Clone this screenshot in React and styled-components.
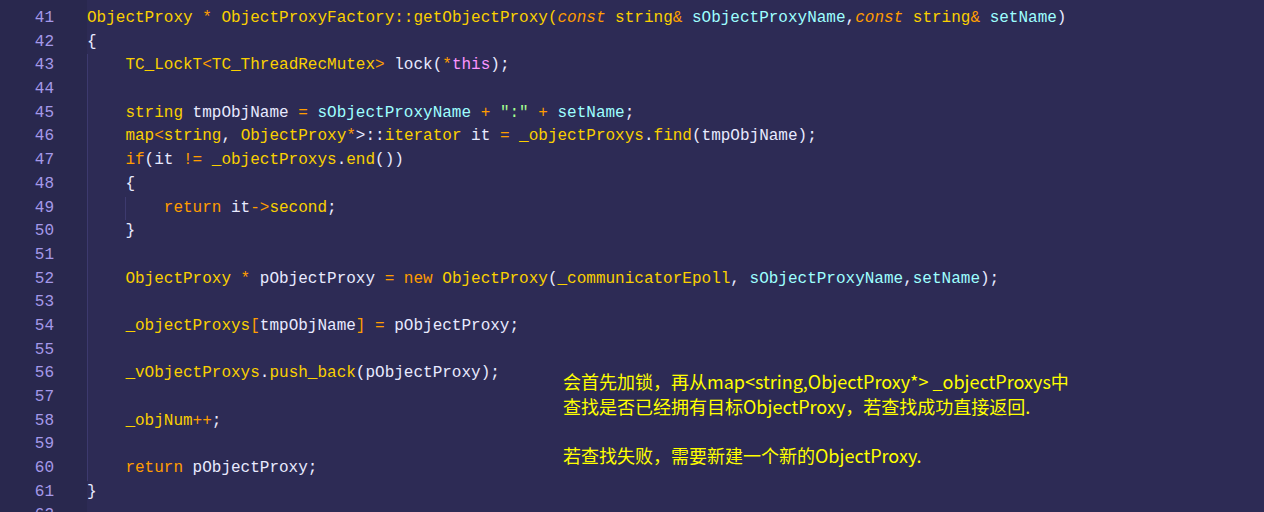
import React from 'react';
import styled, { createGlobalStyle } from 'styled-components';

const GlobalStyle = createGlobalStyle`
  html, body {
    margin: 0;
    padding: 0;
    background: #2d2b55;
    overflow: hidden;
  }
`;

// token colours, shades-of-purple style
const colors = {
  t: '#fad000', // types / functions
  k: '#ff9d00', // keywords, operators
  v: '#9effff', // params
  s: '#a5ff90', // strings
  p: '#fb94ff', // this
  w: '#e8eaff', // plain
};

// t = yellow, k = orange, i = italic orange, v = cyan, s = green, p = pink, w = white
const lines = [
  { n: 41, lvl: 0, code: [['t', 'ObjectProxy'], ['k', ' * '], ['t', 'ObjectProxyFactory::getObjectProxy('], ['i', 'const'], ['t', ' string'], ['k', '&'], ['v', ' sObjectProxyName'], ['w', ','], ['i', 'const'], ['t', ' string'], ['k', '&'], ['v', ' setName'], ['w', ')']] },
  { n: 42, lvl: 0, code: [['w', '{']] },
  { n: 43, lvl: 1, code: [['t', 'TC_LockT'], ['k', '<'], ['t', 'TC_ThreadRecMutex'], ['k', '>'], ['w', ' lock('], ['k', '*'], ['p', 'this'], ['w', ');']] },
  { n: 44, lvl: 1, code: [] },
  { n: 45, lvl: 1, code: [['t', 'string'], ['w', ' tmpObjName '], ['k', '='], ['v', ' sObjectProxyName'], ['k', ' + '], ['s', '":"'], ['k', ' + '], ['v', 'setName'], ['w', ';']] },
  { n: 46, lvl: 1, code: [['t', 'map'], ['k', '<'], ['t', 'string'], ['w', ', '], ['t', 'ObjectProxy'], ['k', '*'], ['w', '>::'], ['t', 'iterator'], ['w', ' it '], ['k', '='], ['t', ' _objectProxys'], ['w', '.'], ['t', 'find'], ['w', '(tmpObjName);']] },
  { n: 47, lvl: 1, code: [['k', 'if'], ['w', '(it '], ['k', '!='], ['t', ' _objectProxys'], ['w', '.'], ['t', 'end'], ['w', '())']] },
  { n: 48, lvl: 1, code: [['w', '{']] },
  { n: 49, lvl: 2, code: [['k', 'return'], ['w', ' it'], ['k', '->'], ['t', 'second'], ['w', ';']] },
  { n: 50, lvl: 1, code: [['w', '}']] },
  { n: 51, lvl: 1, code: [] },
  { n: 52, lvl: 1, code: [['t', 'ObjectProxy'], ['k', ' * '], ['w', 'pObjectProxy '], ['k', '= new'], ['t', ' ObjectProxy'], ['w', '('], ['t', '_communicatorEpoll'], ['w', ', '], ['v', 'sObjectProxyName'], ['w', ','], ['v', 'setName'], ['w', ');']] },
  { n: 53, lvl: 1, code: [] },
  { n: 54, lvl: 1, code: [['t', '_objectProxys'], ['k', '['], ['w', 'tmpObjName'], ['k', '] = '], ['w', 'pObjectProxy;']] },
  { n: 55, lvl: 1, code: [] },
  { n: 56, lvl: 1, code: [['t', '_vObjectProxys'], ['w', '.'], ['t', 'push_back'], ['w', '(pObjectProxy);']] },
  { n: 57, lvl: 1, code: [] },
  { n: 58, lvl: 1, code: [['t', '_objNum'], ['k', '++'], ['w', ';']] },
  { n: 59, lvl: 1, code: [] },
  { n: 60, lvl: 1, code: [['k', 'return'], ['w', ' pObjectProxy;']] },
  { n: 61, lvl: 0, code: [['w', '}']] },
  { n: 62, lvl: 0, code: [] },
];

const Editor = styled.div`
  position: relative;
  display: flex;
  width: 1264px;
  height: 512px;
  background: #2d2b55;
  font-family: "Liberation Mono", "DejaVu Sans Mono", monospace;
  font-size: 16px;
  overflow: hidden;
`;

const Gutter = styled.div`
  width: 87px;
  flex-shrink: 0;
  background: #29284e;
  padding-top: 7px;
`;

const LineNo = styled.div`
  height: 23.7px;
  line-height: 23.7px;
  width: 54px;
  text-align: right;
  color: #a599e9;
`;

const Code = styled.div`
  flex: 1;
  padding-top: 7px;
`;

const Line = styled.div`
  display: flex;
  height: 23.7px;
  line-height: 23.7px;
  white-space: pre;
`;

const Guide = styled.span`
  display: inline-block;
  width: 38.4px;
  height: 100%;
  box-sizing: border-box;
  border-left: 1px solid #3d3a6e;
`;

const Tok = styled.span`
  color: ${p => p.$c};
  font-style: ${p => (p.$italic ? 'italic' : 'normal')};
`;

const Note = styled.div`
  position: absolute;
  left: 563px;
  top: 369px;
  color: #ffff00;
  font-family: "Noto Sans CJK SC", "Noto Sans", sans-serif;
  font-size: 18px;
  line-height: 24.5px;
`;

const NoteGap = styled.div`
  height: 25px;
`;

const renderTok = ([k, text], i) => {
  if (k === 'i') return <Tok key={i} $c={colors.k} $italic>{text}</Tok>;
  return <Tok key={i} $c={colors[k]}>{text}</Tok>;
};

export default function App() {
  return (
    <Editor>
      <GlobalStyle />
      <Gutter>
        {lines.map(l => <LineNo key={l.n}>{l.n}</LineNo>)}
      </Gutter>
      <Code>
        {lines.map(l => (
          <Line key={l.n}>
            {Array.from({ length: l.lvl }).map((_, i) => <Guide key={i} />)}
            {l.code.map(renderTok)}
          </Line>
        ))}
      </Code>
      <Note>
        <div>会首先加锁，再从map&lt;string,ObjectProxy*&gt; _objectProxys中</div>
        <div>查找是否已经拥有目标ObjectProxy，若查找成功直接返回.</div>
        <NoteGap />
        <div>若查找失败，需要新建一个新的ObjectProxy.</div>
      </Note>
    </Editor>
  );
}
